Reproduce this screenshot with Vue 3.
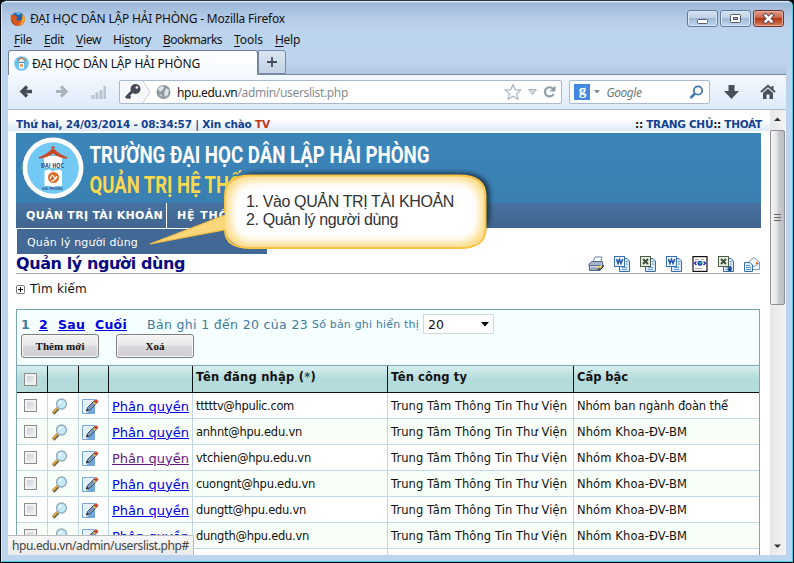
<script setup>
const vFit = {
  mounted(el, { value }) {
    const natural = el.getBoundingClientRect().width
    const count = Math.max(1, Array.from(el.textContent.trim()).length)
    el.style.letterSpacing = (value - natural) / count + 'px'
  },
}

const menus = [
  { key: 'F', before: '', after: 'ile', width: 18 },
  { key: 'E', before: '', after: 'dit', width: 20 },
  { key: 'V', before: '', after: 'iew', width: 25 },
  { key: 's', before: 'Hi', after: 'tory', width: 38 },
  { key: 'B', before: '', after: 'ookmarks', width: 59 },
  { key: 'T', before: '', after: 'ools', width: 29 },
  { key: 'H', before: '', after: 'elp', width: 25 },
]

const exportsList = ['print', 'word', 'excel', 'word', 'html', 'excelA', 'mail']

const rows = [
  { user: 'tttttv@hpulic.com', w: 98, group: 'Nhóm ban ngành đoàn thể', gw: 151 },
  { user: 'anhnt@hpu.edu.vn', w: 106, group: 'Nhóm Khoa-ĐV-BM', gw: 110 },
  { user: 'vtchien@hpu.edu.vn', w: 115, group: 'Nhóm Khoa-ĐV-BM', gw: 110, visited: true },
  { user: 'cuongnt@hpu.edu.vn', w: 119, group: 'Nhóm Khoa-ĐV-BM', gw: 110 },
  { user: 'dungtt@hpu.edu.vn', w: 110, group: 'Nhóm Khoa-ĐV-BM', gw: 110 },
  { user: 'dungth@hpu.edu.vn', w: 113, group: 'Nhóm Khoa-ĐV-BM', gw: 110 },
  { user: '', w: 0, group: '', gw: 0 },
]
</script>

<template>
  <div class="screen">
    <div class="window">
      <header class="titlebar">
        <svg class="fox" width="16" height="16" viewBox="0 0 16 16">
          <circle cx="8" cy="7.5" r="6.6" fill="#2462a8" />
          <path d="M5 2.5 Q8 0 12 2 L9 4 Z" fill="#65b5e4" />
          <path d="M1 3 L2.6 4.2 Q4 3.6 5.5 4.4 L8 7 L6 8 Q7 10.5 10 9.5 Q13 8 12.4 4 Q15.5 6 14.8 9.8 Q13.5 14.8 8 15 Q2.4 14.6 1 9.6 Q.2 6 1 3Z" fill="#d9571d" />
          <path d="M12.4 3 Q15.6 6 14.6 10 Q13 13.5 9 14 Q13 11 12.4 3Z" fill="#f5b12d" />
          <path d="M1 8 Q3 13 7 14.7 Q3 14 1.2 10Z" fill="#8d2a22" />
        </svg>
        <span v-fit="255" class="title">ĐẠI HỌC DÂN LẬP HẢI PHÒNG - Mozilla Firefox</span>
        <div class="controls">
          <span class="ctl">
            <svg width="29" height="15"><rect x="9.5" y="8.5" width="10" height="4" rx="1" fill="#fff" stroke="#535a6b" /></svg>
          </span>
          <span class="ctl">
            <svg width="29" height="15"><rect x="9.5" y="3.5" width="10" height="8" rx="1" fill="#fff" stroke="#535a6b" /><rect x="12.5" y="6.5" width="4" height="2" fill="#a9c0dc" stroke="#535a6b" /></svg>
          </span>
          <span class="ctl close">
            <svg width="29" height="15"><path d="M11.500 4.500 L17.500 10.500 M17.500 4.500 L11.500 10.500" stroke="#5a4550" stroke-width="4.400" stroke-linecap="square" /><path d="M11.500 4.500 L17.500 10.500 M17.500 4.500 L11.500 10.500" stroke="#fff" stroke-width="2.500" stroke-linecap="square" /></svg>
          </span>
        </div>
      </header>

      <nav class="menubar">
        <span v-for="m in menus" :key="m.key" v-fit="m.width">{{ m.before }}<u>{{ m.key }}</u>{{ m.after }}</span>
      </nav>

      <div class="tabs">
        <div class="tab">
          <svg width="15" height="15" viewBox="0 0 15 15">
            <circle cx="7.5" cy="7.5" r="7.3" fill="#6cc4ee" />
            <path d="M3.5 4.5 L7.5 1.8 L11.5 4.5" fill="#fff" stroke="#c56b3d" stroke-width="1.3" />
            <rect x="5" y="4.5" width="5" height="8" fill="#fff" />
            <circle cx="7.5" cy="9.5" r="1.8" fill="#eda15d" />
            <path d="M4.5 6.3 H10.5" stroke="#456b9b" />
          </svg>
          <span v-fit="168">ĐẠI HỌC DÂN LẬP HẢI PHÒNG</span>
        </div>
        <div class="newtab">
          <svg width="12" height="12"><path d="M6 1 V11 M1 6 H11" stroke="#444b55" stroke-width="1.8" /></svg>
        </div>
      </div>

      <div class="toolbar">
        <svg class="navs" width="95" height="22" viewBox="0 0 95 22">
          <path d="M11 5.500 L6 10.500 L11 15.500 M6.500 10.500 H16" fill="none" stroke="#454b57" stroke-width="3.400" />
          <path d="M45 5.500 L50 10.500 L45 15.500 M49.500 10.500 H40" fill="none" stroke="#a9b4c1" stroke-width="3.200" />
          <g fill="#b9c4d1"><rect x="75.500" y="14" width="3" height="4" /><rect x="79.500" y="11.500" width="3" height="6.500" /><rect x="83.500" y="9" width="3" height="9" /><rect x="87.500" y="5" width="2.500" height="13" /></g>
        </svg>
        <div class="urlbar">
          <svg width="56" height="22" viewBox="0 0 56 22">
            <path d="M0 0 H23 L30 11 L23 22 H0 Z" fill="#f6f8fb" />
            <path d="M23 0 L30 11 L23 22" fill="none" stroke="#c8ced8" />
            <circle cx="15.500" cy="8" r="5" fill="#454a55" /><circle cx="16.800" cy="6.500" r="1.300" fill="#f6f8fb" />
            <path d="M12.500 10 L6 17 M8 15.500 L10.500 17" stroke="#454a55" stroke-width="3" />
            <circle cx="43.500" cy="11" r="7" fill="#8e979d" />
            <path d="M38 8 Q41 4 44 5.500 L43 9 L40 11 Z M46 7 L49 9 L48 14 L45 16 L44 12 Z M39 13 L42 14 L42 16Z" fill="#dfe4e8" />
          </svg>
          <span v-fit="171" class="url"><b>hpu.edu.vn</b>/admin/userslist.php</span>
          <svg class="urlicons" width="56" height="20" viewBox="0 0 56 20">
            <path d="M9 2.500 L11.200 7.700 L16.800 8.100 L12.500 11.800 L13.900 17.200 L9 14.300 L4.100 17.200 L5.500 11.800 L1.200 8.100 L6.800 7.700 Z" fill="#fff" stroke="#aab6c2" stroke-width="1.200" />
            <path d="M24.500 7.500 H32.500 L28.500 12.500 Z" fill="#d5dadf" stroke="#a7b2bc" />
            <path d="M49 6.800 A4.600 4.600 0 1 0 49.600 12" fill="none" stroke="#8f9ca9" stroke-width="2.200" /><path d="M51.500 3.500 V9.500 H45.500 Z" fill="#8f9ca9" />
          </svg>
        </div>
        <div class="search">
          <span class="g">g</span>
          <svg width="6" height="4"><path d="M0 0 H6 L3 3.500 Z" fill="#7b8693" /></svg>
          <i v-fit="35">Google</i>
          <svg class="lens" width="15" height="15"><circle cx="9" cy="5.500" r="4.200" fill="none" stroke="#3f78b5" stroke-width="1.800" /><path d="M6 8.500 L1.500 13" stroke="#3f78b5" stroke-width="2.500" /></svg>
        </div>
        <svg class="down" width="16" height="16"><path d="M4.500 1 H10.500 V7 H15 L7.500 15 L0 7 H4.500 Z" fill="#4a4f5c" /></svg>
        <svg class="home" width="16" height="16"><path d="M1 8 L8 1.800 L15 8 M12.500 2 V5" fill="none" stroke="#4a4f5c" stroke-width="2" /><path d="M3 9 L8 4.600 L13 9 V15 H9.500 V10.500 H6.500 V15 H3 Z" fill="#4a4f5c" /></svg>
      </div>

      <div class="viewport">
        <main class="page">
          <div class="topline">
            <b v-fit="254">Thứ hai, 24/03/2014 - 08:34:57 | Xin chào <em>TV</em></b>
            <b v-fit="127"><s>::</s> TRANG CHỦ<s>::</s> THOÁT</b>
          </div>
          <div class="banner">
            <svg width="450" height="69" viewBox="0 0 450 69">
              <circle cx="37" cy="35" r="30.500" fill="#fff" />
              <circle cx="37" cy="35" r="25.800" fill="#72c9f3" />
              <path d="M28 23 H46 V35 H28 Z" fill="#fff" />
              <path d="M23 25 Q31 22 37 16 Q43 22 51 25 Q42 24 37 19.500 Q32 24 23 25Z" fill="#cc4a27" stroke="#cc4a27" stroke-width="1.600" />
              <path d="M34.500 15 L37 13 L39.500 15 Z" fill="#cc4a27" />
              <path d="M28.500 38 Q33 35 37 38.500 Q41 35 46 38 V53 Q41 52 37 54 Q33 52 28.500 53 Z" fill="#fff" />
              <circle cx="37.500" cy="44.500" r="5.500" fill="#dc6b24" /><path d="M34 46 Q36 40 38 44 T41 43 M35 48 Q39 48 40 44" fill="none" stroke="#fff" stroke-width="1.200" />
              <text x="25" y="34.500" textLength="23" lengthAdjust="spacingAndGlyphs" class="lg">ĐẠI HỌC</text>
              <text x="26" y="57" textLength="21" lengthAdjust="spacingAndGlyphs" class="ls">HẢI PHÒNG</text>
              <text x="73.500" y="29.500" textLength="340" lengthAdjust="spacingAndGlyphs" class="t1">TRƯỜNG ĐẠI HỌC DÂN LẬP HẢI PHÒNG</text>
              <text x="73.500" y="60" textLength="178" lengthAdjust="spacingAndGlyphs" class="t2">QUẢN TRỊ HỆ THỐNG</text>
            </svg>
          </div>
          <nav class="mainnav">
            <span class="item"><b v-fit="137">QUẢN TRỊ TÀI KHOẢN</b></span>
            <span class="item"><b v-fit="72">HỆ THỐNG</b></span>
          </nav>
          <div class="submenu"><span v-fit="111">Quản lý người dùng</span></div>
          <div class="heading">
            <h1 v-fit="169">Quản lý người dùng</h1>
            <div class="exports">
              <svg v-for="(k, i) in exportsList" :key="i" width="16" height="16" viewBox="0 0 16 16">
                <template v-if="k === 'print'">
                  <path d="M5 6 L7 1 H14 L12.500 7 Z" fill="#fff" stroke="#7187a4" />
                  <path d="M1 8 L4 5.500 H14.500 L15 11 L12 14.500 H1.500 Z" fill="#a8b5cc" stroke="#53688c" /><path d="M1.500 9.500 H11.500 V14 H2 Z" fill="#e2e8f1" stroke="#53688c" /><path d="M3 12 H9" stroke="#53688c" /><rect x="10" y="10" width="3" height="2" fill="#e5ca43" /><path d="M9 13 H13 L15 11 V9" stroke="#222" fill="none" />
                </template>
                <template v-else-if="k === 'word'">
                  <path d="M6.500 2.500 H13 L15.500 5 V15.500 H5.500 V9" fill="#d5e7fb" stroke="#386ca8" /><path d="M8 11.500 H13 M8 13.500 H13 M12 5.500 H14 M12 8 H14" stroke="#709dcc" />
                  <rect x=".5" y=".5" width="10" height="10" fill="#edf5ff" stroke="#376faf" /><path d="M2.500 3 L4 7.500 L5.500 3.500 L7 7.500 L8.800 3" fill="none" stroke="#2454a4" stroke-width="1.500" />
                </template>
                <template v-else-if="k === 'excel' || k === 'excelA'">
                  <path d="M6.500 2.500 H13 L15.500 5 V15.500 H5.500 V9" fill="#d5e7fb" stroke="#386ca8" /><path d="M8 11.500 H13 M8 13.500 H13 M12 5.500 H14 M12 8 H14" stroke="#709dcc" />
                  <rect x=".5" y=".5" width="10" height="10" fill="#e8eddf" stroke="#4a5c45" /><path d="M3 3 L8 8 M8 3 L3 8" stroke="#3d4d38" stroke-width="1.900" />
                  <path v-if="k === 'excelA'" d="M10.500 11.500 Q13 9.500 13 12 V14.500 M13 12.500 Q9.500 12.500 10.500 14 Q12 15 13 13.500" fill="none" stroke="#173e85" stroke-width="1.400" />
                </template>
                <template v-else-if="k === 'html'">
                  <rect x="1" y=".6" width="14" height="14.800" fill="#fff" stroke="#111" stroke-width="1.200" /><path d="M3 3.500 H7 M9 3.500 H12 M3 12.500 H10" stroke="#aaa" /><path d="M4.500 5.500 L2.500 7.300 L4.500 9 M11.500 5.500 L13.500 7.300 L11.500 9" fill="none" stroke="#1919a6" stroke-width="1.200" /><circle cx="8" cy="7.300" r="2.500" fill="#1543b2" /><circle cx="8.500" cy="7" r="1.100" fill="#43d2a2" />
                </template>
                <template v-else>
                  <path d="M4.500 6 L10 1.500 L15.500 6 V13.500 H4.500 Z" fill="#f4f9ff" stroke="#8099b8" /><path d="M4.500 7 L10 10.500 L15.500 7" fill="none" stroke="#8099b8" /><rect x="12" y="6" width="2" height="2" fill="#dc6b32" />
                  <path d="M.5 6.500 H6 L8.500 9 V15.500 H.5 Z" fill="#dbeefd" stroke="#3a70ac" /><path d="M2 9.500 H6 M2 11.500 H7 M2 13.500 H7" stroke="#5b91c5" />
                </template>
              </svg>
            </div>
          </div>
          <div class="find">
            <svg width="9" height="9"><rect x=".5" y=".5" width="8" height="8" rx="1" fill="#fff" stroke="#777" /><path d="M2 4.500 H7 M4.500 2 V7" stroke="#111" /></svg>
            <span v-fit="57">Tìm kiếm</span>
          </div>

          <section class="grid">
            <div class="panel">
              <div class="pager">
                <b class="cur">1</b>
                <a v-fit="9">2</a>
                <a v-fit="27">Sau</a>
                <a v-fit="32">Cuối</a>
                <span v-fit="161" class="info">Bản ghi 1 đến 20 của 23</span>
                <span v-fit="107" class="per">Số bản ghi hiển thị</span>
                <span class="select">20<svg width="8" height="5"><path d="M0 0 H8 L4 4.500 Z" fill="#000" /></svg></span>
              </div>
              <div class="buttons">
                <button><span v-fit="49">Thêm mới</span></button>
                <button><span v-fit="19">Xoá</span></button>
              </div>
            </div>
            <div class="row head">
              <span class="cell"><i class="check"></i></span><span class="cell"></span><span class="cell"></span><span class="cell"></span>
              <span class="cell"><b v-fit="120">Tên đăng nhập (<em>*</em>)</b></span>
              <span class="cell"><b v-fit="76">Tên công ty</b></span>
              <span class="cell"><b v-fit="51">Cấp bậc</b></span>
            </div>
            <div v-for="(r, i) in rows" :key="i" class="row">
              <span class="cell"><i v-if="r.user" class="check"></i></span>
              <span class="cell ico">
                <svg v-if="r.user" width="17" height="17" viewBox="0 0 17 17"><path d="M7 10.500 L2 15.500" stroke="#5e584b" stroke-width="3.600" /><path d="M6.500 10 L1.500 15" stroke="#dfa83e" stroke-width="2" /><circle cx="10.500" cy="6" r="5" fill="#c7eaf9" stroke="#91a9b9" stroke-width="1.300" /><path d="M8 6 Q8 3 11 3 Q10 6 8 6Z" fill="#fff" /></svg>
              </span>
              <span class="cell ico">
                <svg v-if="r.user" width="17" height="17" viewBox="0 0 17 17"><path d="M.5 1.500 H12.500 V15.500 H.5 Z" fill="#e3f1fd" stroke="#7ba5d3" /><path d="M12.500 8 V15.500 H4 Z" fill="#6da8dd" /><path d="M4.500 13 L5.500 9.500 L12 3 L14.500 5.500 L8 12 Z" fill="#7f9ab8" stroke="#414f67" /><path d="M12.500 3 L14 1.500 L16 3.500 L14.500 5 Z" fill="#d9401f" stroke="#c83822" /><path d="M11.500 4 L13.800 6.300" stroke="#e9be4a" stroke-width="1.400" /><path d="M4 13.500 L5.100 10.800 L6.900 12.300 Z" fill="#222" /></svg>
              </span>
              <span class="cell"><a v-if="r.user" v-fit="77" :class="{ visited: r.visited }">Phân quyền</a></span>
              <span class="cell"><span v-if="r.user" v-fit="r.w">{{ r.user }}</span></span>
              <span class="cell"><span v-if="r.user" v-fit="176">Trung Tâm Thông Tin Thư Viện</span></span>
              <span class="cell"><span v-if="r.user" v-fit="r.gw">{{ r.group }}</span></span>
            </div>
          </section>
        </main>
        <aside class="scroll">
          <svg width="15" height="19"><path d="M4 11 H11 L7.500 7.500 Z" fill="#333" /></svg>
          <div class="thumb"><i></i><i></i><i></i></div>
          <svg width="15" height="17"><path d="M4 6.500 H11 L7.500 10 Z" fill="#333" /></svg>
        </aside>
      </div>
    </div>

    <div class="status"><span v-fit="177">hpu.edu.vn/admin/userslist.php#</span></div>

    <div class="callout">
      <svg width="370" height="110" viewBox="140 160 370 110">
        <defs>
          <filter id="soft" x="-10%" y="-30%" width="120%" height="160%"><feGaussianBlur stdDeviation="2" /></filter>
          <filter id="glow" x="-10%" y="-30%" width="120%" height="160%"><feGaussianBlur stdDeviation="5" /></filter>
          <clipPath id="bubble"><rect x="225" y="175.500" width="260.500" height="72.500" rx="26" ry="19" /></clipPath>
        </defs>
        <rect x="230" y="172.500" width="260" height="64" rx="26" ry="19" fill="#13263a" opacity=".75" filter="url(#soft)" />
        <path d="M150 244 L229 213.500 V229 Z" fill="#fbd77b" stroke="#f3bd42" stroke-width="1.200" />
        <g clip-path="url(#bubble)">
          <rect x="224" y="174" width="263" height="76" fill="#fddc88" />
          <rect x="231" y="181" width="249" height="61" rx="20" fill="#fff" filter="url(#glow)" />
          <rect x="238" y="188" width="235" height="47" rx="16" fill="#fff" filter="url(#glow)" />
        </g>
        <path d="M225 213 V196 Q225 175.500 251 175.500 H459 Q485.500 175.500 485.500 196 V229 Q485.500 248 459 248 H251 Q225 248 225 230" fill="none" stroke="#f9c344" stroke-width="2" />
      </svg>
      <div class="steps">
        <div><span v-fit="208">1. Vào QUẢN TRỊ TÀI KHOẢN</span></div>
        <div><span v-fit="152">2. Quản lý người dùng</span></div>
      </div>
    </div>
  </div>
</template>

<style>
body { margin: 0; overflow: hidden; }
</style>

<style scoped>
* { box-sizing: border-box; }
.screen { position: relative; width: 794px; height: 563px; background: #050a10; overflow: hidden; font-family: "DejaVu Sans", sans-serif; font-size: 11px; color: #111; }
.screen span, .screen b, .screen a, h1 { white-space: nowrap; }
svg { display: block; flex: none; }
.window { height: 562px; width: 792px; margin-left: 1px; border: solid #45cbea; border-width: 1px; border-left-color: #dbeaf8; border-top-color: #28343f; border-radius: 6px 6px 0 0; background: #bdd4ee; display: flex; flex-direction: column; padding: 0 6px; }
.titlebar { height: 28px; margin: 0 -6px; padding: 7px 8px 0; display: flex; align-items: center; background: linear-gradient(#dae6f3 0 1px, #9ab6d6 2px, #b3cae7 55%, #bdd3ee); border-radius: 5px 5px 0 0; font: 12px "Noto Sans", sans-serif; }
.fox { margin: 0 4px 0 0; }
.title { margin-top: -1px; }
.controls { margin-left: auto; margin-right: 0; display: flex; gap: 2px; align-self: flex-start; margin-top: 2px; }
.ctl { width: 31px; height: 17px; border: 1px solid #64799a; border-radius: 3px; background: linear-gradient(#d4e2f2, #bfd0e5 48%, #9fb9d7 50%, #bed6ee); box-shadow: inset 0 0 0 1px #d9e8f7; }
.close { background: linear-gradient(#dd9d8d, #cb6247 48%, #b43516 50%, #d68159); border-color: #6d302d; box-shadow: inset 0 0 0 1px #e5b09f; }
.menubar { height: 21px; display: flex; align-items: center; gap: 12px; padding: 0 0 1px 6px; font: 12px "Noto Sans", sans-serif; flex: none; }
u { text-underline-offset: 2px; }
.tabs { height: 25px; flex: none; display: flex; align-items: flex-end; border-bottom: 1px solid #7888a6; background: linear-gradient(#bdd3ee 50%, #b0c5e1); }
.tab { width: 250px; height: 25px; margin-bottom: -1px; background: linear-gradient(#fff, #f5faff); border: 1px solid #7182a1; border-bottom: 0; border-radius: 3px 3px 0 0; padding-left: 5px; display: flex; align-items: center; gap: 3px; font: 12px "Noto Sans", sans-serif; }
.newtab { width: 28px; height: 24px; border: 1px solid #7888a6; border-radius: 0 3px 0 0; background: linear-gradient(#d9e5f2, #c2d3e5); display: grid; place-items: center; }
.toolbar { height: 35px; flex: none; display: flex; align-items: center; background: linear-gradient(#f3f8fe, #deebfa); border-bottom: 1px solid #a7b9ce; padding: 0 10px 0 8px; font: 12px "Noto Sans", sans-serif; }
.navs { margin-right: 8px; }
.urlbar { width: 445px; height: 24px; background: #fff; border: 1px solid #a9b9cf; border-radius: 2px; display: flex; align-items: center; }
.url { color: #8a8d92; margin-left: 1px; }
.url b { color: #111; font-weight: 400; }
.urlicons { margin-left: auto; margin-right: 1px; }
.search { width: 141px; height: 24px; margin-left: 7px; background: #fff; border: 1px solid #a9b9cf; border-radius: 2px; display: flex; align-items: center; padding: 0 5px 0 4px; }
.g { width: 16px; height: 16px; background: #4489df; color: #fff; font: bold 15px/13px "Liberation Serif", serif; text-align: center; margin-right: 4px; }
.search i { color: #6e7b78; margin-left: 6px; }
.lens { margin-left: auto; }
.down { margin-left: 14px; }
.home { margin-left: 20px; }
.viewport { height: 445px; flex: none; display: flex; background: #fff; overflow: hidden; }
.page { width: 762px; padding: 0 10px 0 8px; overflow: hidden; }
.topline { height: 23px; margin: 0 -10px 0 -8px; padding: 4px 8px 0 8px; display: flex; justify-content: space-between; align-items: center; background: linear-gradient(#fff 40%, #dceaf7 92%, #fff 94%); color: #123f91; font-size: 10.500px; }
.topline em { color: #c4341a; font-style: normal; }
s { color: #111; text-decoration: none; }
.banner { width: 745px; height: 70px; background: linear-gradient(#3b86b9, #3a7fb2); }
.t1, .t2 { font: 700 24px Roboto, sans-serif; fill: #fff; }
.t2 { fill: #f9d84d; }
.lg { font: 700 7px "DejaVu Sans", sans-serif; fill: #36568d; }
.ls { font: 700 4px "DejaVu Sans", sans-serif; fill: #36568d; }
.mainnav { width: 745px; height: 25px; display: flex; background: linear-gradient(#46719f, #416690); color: #fff; }
.item { height: 25px; padding: 0 3px 0 10px; border-right: 1px solid #fff; display: flex; align-items: center; font-size: 11px; }
.item + .item { border: 0; }
.submenu { width: 250px; height: 25px; margin: 1px 0 0 1px; padding: 1px 0 0 10px; background: #426995; color: #fff; display: flex; align-items: center; }
.heading { width: 744px; height: 20px; border-bottom: 1px solid #aaa; display: flex; justify-content: space-between; align-items: center; }
h1 { margin: 0; font-size: 16px; line-height: 20px; color: #080880; }
.exports { display: flex; gap: 10px; }
.find { height: 30px; margin-bottom: 5px; display: flex; align-items: center; gap: 5px; font-size: 12px; }
.grid { width: 744px; border: 1px solid #7ba7b1; height: 300px; overflow: hidden; }
.panel { height: 55px; background: #f6ffff; padding: 3px 4px; }
.pager { height: 22px; display: flex; align-items: center; color: #427a9f; font-size: 12.500px; }
.pager a { color: #0000e0; font-weight: 700; text-decoration: underline; margin-left: 10px; }
.pager .cur + a { margin-left: 9px; }
.cur { width: 9px; }
.info { margin-left: 20px; }
.per { font-size: 11px; margin-left: 4px; }
.select { width: 71px; height: 20px; margin-left: 4px; border: 1px solid #d2d9de; background: #fff; color: #111; display: flex; align-items: center; justify-content: space-between; padding: 0 4px; font-size: 12.500px; }
.buttons { display: flex; gap: 17px; }
button { width: 78px; height: 24px; padding: 0; margin-top: -1px; border: 1px solid #7f7f7f; border-radius: 3px; background: linear-gradient(#f5f5f5, #e7e7e7 48%, #d8d8dc 50%, #cfcfd4); font: 700 11px "Liberation Serif", serif; color: #111; box-shadow: inset 0 0 0 1px #f8f8f8; }
.row { display: grid; grid-template-columns: 31px 31px 30px 84px 195px 186px 185px; height: 26px; border-bottom: 1px solid #c3d8e5; font-size: 11.500px; }
.row:nth-child(odd) { background: #fff; }
.row:nth-child(even) { background: #f7fff8; }
.cell { border-right: 1px solid #c3d8e5; padding: 1px 0 0 3px; display: flex; align-items: center; }
.cell:last-child { border-right: 0; }
.cell:first-child { padding: 0 0 0 7px; }
.row.head { height: 28px; background: linear-gradient(#d8eeee, #b4dbdb 50%, #b6dcdc); border-top: 1px solid #7ba7b1; border-bottom: 1px solid #111; }
.head .cell { border-right-color: #111; padding-top: 0; padding-bottom: 5px; }
.head .cell:first-child { padding-bottom: 0; }
.head .cell:last-child { border: 0; }
.head em { color: #1b5368; font-style: normal; }
.check { width: 13px; height: 13px; border: 1px solid #8d8d8d; background: linear-gradient(135deg, #c9cdd2, #f3f3f3); box-shadow: inset 0 0 0 2px #f2f2f2; }
.row a { color: #0000e8; text-decoration: underline; font-size: 13px; }
.row a.visited { color: #681885; }
.scroll { width: 16px; height: 445px; background: linear-gradient(90deg, #e7e7e7, #f3f3f3); display: flex; flex-direction: column; }
.thumb { width: 15px; height: 175px; border: 1px solid #909095; border-radius: 2px; background: linear-gradient(90deg, #f5f5f5, #e5e5e8 45%, #cbccd1 55%, #bdbec5); display: flex; flex-direction: column; align-items: center; justify-content: center; gap: 2px; margin-top: 1px; margin-bottom: auto; }
.thumb i { width: 7px; height: 1px; background: #666; }
.status { position: absolute; left: 8px; top: 535px; width: 186px; height: 20px; background: linear-gradient(#f7f7f7, #eaeaea); border: solid #bcbcbc; border-width: 1px 1px 0 0; border-radius: 0 2px 0 0; padding-left: 4px; font: 12px/20px "Noto Sans", sans-serif; color: #444; }
.callout { position: absolute; left: 140px; top: 160px; width: 370px; height: 110px; }
.steps { position: absolute; left: 106px; top: 33px; font: 16px/18px "Liberation Sans", sans-serif; color: #333; }
</style>
